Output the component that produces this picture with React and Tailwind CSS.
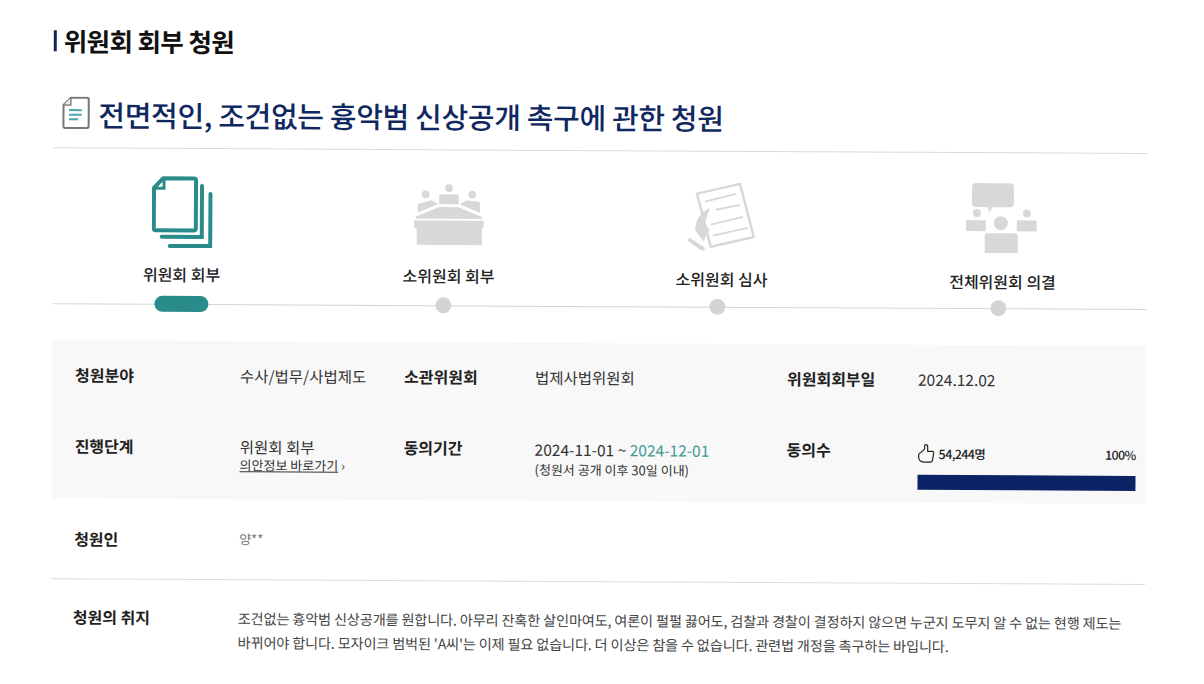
import React from "react";

const G = "#d8d8d8";
const T = "#2a8c8a";

function DocIcon() {
  return (
    <svg width="30" height="33" viewBox="0 0 32 36" fill="none">
      <path d="M11 1.500h17.500a2 2 0 0 1 2 2v29a2 2 0 0 1-2 2H5a2 2 0 0 1-2-2V9.500z" fill="#fff" stroke="#777" strokeWidth="2.200" />
      <path d="M3 9.500h8v-8" fill="#eee" stroke="#777" strokeWidth="1.500" />
      <path d="M9 15h14M9 20h14M9 25h10" stroke="#4fa6a6" strokeWidth="2.200" />
    </svg>
  );
}
function StackIcon() {
  return (
    <svg width="61" height="73" viewBox="0 0 61 73" fill="none" stroke={T} strokeWidth="4">
      <path d="M11 2.500h31a2 2 0 0 1 2 2v48a2 2 0 0 1-2 2H4a2 2 0 0 1-2-2V12z" strokeLinejoin="round" />
      <path d="M2 12.500h10V3" strokeWidth="3" />
      <path d="M50 10v51H10" strokeLinecap="round" />
      <path d="M58.500 18v52H18" strokeLinecap="round" />
    </svg>
  );
}
function MeetingIcon() {
  return (
    <svg width="70" height="63" viewBox="0 0 72 64" fill={G}>
      <circle cx="36" cy="4.500" r="4" />
      <circle cx="12" cy="11" r="4" />
      <circle cx="60" cy="11" r="4" />
      <rect x="26" y="11" width="20" height="10" />
      <path d="M4 21l14-4 7 4-21 9zM68 21a3 3 0 0 0-3-3l-11-1-7 4 21 9z" />
      <path d="M2 34l24-10h20l24 10v2H2z" />
      <path d="M0 38h72v7l-2 1v17H3V46l-3-1z" />
    </svg>
  );
}
function ReviewIcon() {
  return (
    <svg width="67" height="68" viewBox="0 0 67 68" fill="none">
      <path d="M9 11L52 1l14 53-43 10z" fill="#fff" stroke={G} strokeWidth="2.500" />
      <path d="M17 19l31-8M28 27l24-5M23 42l32-8M25 53l35-8" stroke={G} strokeWidth="1.800" />
      <path d="M22 25c-6 3-10 7-13 13l-2 9 9 12 3-9 3-2-5-8z" fill={G} />
      <path d="M2 56l-1 2 14 10 1.500-2.500z" fill={G} stroke={G} strokeWidth="1.500" />
    </svg>
  );
}
function PanelIcon() {
  return (
    <svg width="71" height="70" viewBox="0 0 71 70" fill={G}>
      <path d="M10 0h34a4 4 0 0 1 4 4v16a4 4 0 0 1-4 4H27l-4 5-1-5H10a4 4 0 0 1-4-4V4a4 4 0 0 1 4-4z" />
      <circle cx="11" cy="30" r="4" />
      <circle cx="61" cy="30" r="4" />
      <rect x="0" y="37" width="20" height="11" />
      <rect x="51" y="37" width="20" height="11" />
      <circle cx="35" cy="40" r="7" />
      <path d="M22 50h27a3 3 0 0 1 3 3v17H19V53a3 3 0 0 1 3-3z" />
    </svg>
  );
}
function ThumbIcon() {
  return (
    <svg width="17" height="20" viewBox="0 0 17 20" fill="none" stroke="#222" strokeWidth="1.200" strokeLinejoin="round">
      <path d="M1 11.500c0-1.500 1-2.300 2.500-3L7 5V2c0-.8.500-1.300 1.200-1.300S10 1.500 10 3v4.500h4.500c1.200 0 1.800 1 1.600 2l-1.300 7c-.2 1-1 1.700-2 1.700H6.500C3 18.200 1 16 1 13z" />
    </svg>
  );
}

const labelCls = "text-[16px] font-bold text-[#222] leading-[20px]";
const valueCls = "text-[15.500px] text-[#333] leading-[20px]";
const stepLabel = "flex justify-center text-[16px] font-medium leading-[20px] text-[#222]";

export default function App() {
  return (
    <div
      className="w-[1204px] h-[684px] overflow-hidden bg-white origin-top-left rotate-[0.3deg] pl-[54px] pt-[27px] text-[#222]"
      style={{ fontFamily: '"Noto Sans CJK KR", "Noto Sans", sans-serif' }}
    >
      <div className="w-[1094px]">
        <div className="flex items-center gap-[7px] h-[26px]">
          <div className="w-[3px] h-[21px] bg-[#13264f]" />
          <div className="text-[25.500px] font-bold tracking-[-0.6px] leading-[26px] text-[#111]">위원회 회부 청원</div>
        </div>
        <div className="flex items-center gap-[8px] mt-[31px] h-[64px] pb-[6px] border-b border-[#d9d9d9]">
          <div className="ml-[7px] flex"><DocIcon /></div>
          <div className="text-[29px] font-medium tracking-[-0.33px] leading-[36px] text-[#10285f]">
            전면적인, 조건없는 흉악범 신상공개 촉구에 관한 청원
          </div>
        </div>

        <div className="flex h-[101px]">
          <div className="w-[258px] flex justify-center pt-[27px]"><StackIcon /></div>
          <div className="w-[266px] flex justify-center pt-[33px]"><div className="ml-[10px]"><MeetingIcon /></div></div>
          <div className="w-[282px] flex justify-center pt-[31px]"><div className="ml-[7px]"><ReviewIcon /></div></div>
          <div className="w-[280px] flex justify-center pt-[30px]"><div className="ml-[5px]"><PanelIcon /></div></div>
        </div>

        <div className="flex">
          <div className={`w-[258px] ${stepLabel} mt-[14px]`}>위원회 회부</div>
          <div className={`w-[266px] ${stepLabel} mt-[14px] pl-[10px]`}>소위원회 회부</div>
          <div className={`w-[282px] ${stepLabel} mt-[16px] pl-[8px]`}>소위원회 심사</div>
          <div className={`w-[280px] ${stepLabel} mt-[17px] pl-[8px]`}>전체위원회 의결</div>
        </div>

        <div className="flex border-t border-[#d5d5d5] mt-[17px]">
          <div className="w-[258px] flex justify-center">
            <div className="w-[54px] h-[16px] -mt-[9px] rounded-full" style={{ backgroundColor: T }} />
          </div>
          <div className="w-[266px] flex justify-center">
            <div className="w-[16px] h-[16px] -mt-[9px] rounded-full bg-[#d4d4d4]" />
          </div>
          <div className="w-[282px] flex justify-center">
            <div className="w-[16px] h-[16px] -mt-[9px] rounded-full bg-[#d4d4d4]" />
          </div>
          <div className="w-[280px] flex justify-center">
            <div className="w-[16px] h-[16px] -mt-[9px] rounded-full bg-[#d4d4d4]" />
          </div>
        </div>

        <div className="mt-[29px] h-[158px] bg-[#f8f8f8] pl-[23px] pt-[24px] grid grid-cols-[165px_164px_131px_252px_131px_218px] grid-rows-[71px_63px]">
          <div className={labelCls}>청원분야</div>
          <div className={valueCls}>수사/법무/사법제도</div>
          <div className={labelCls}>소관위원회</div>
          <div className={valueCls}>법제사법위원회</div>
          <div className={labelCls}>위원회회부일</div>
          <div className={valueCls}>2024.12.02</div>

          <div className={labelCls}>진행단계</div>
          <div className="flex flex-col">
            <div className={valueCls}>위원회 회부</div>
            <div className="text-[13px] leading-[16px] mt-[1px] text-[#333]">
              <span className="underline">의안정보 바로가기</span> <span>›</span>
            </div>
          </div>
          <div className={labelCls}>동의기간</div>
          <div className="flex flex-col pt-[1px]">
            <div className="text-[15.500px] leading-[20px] text-[#333]">
              2024-11-01 ~ <span className="text-[#3f9a94]">2024-12-01</span>
            </div>
            <div className="text-[13px] leading-[16px] mt-[3px] text-[#333]">(청원서 공개 이후 30일 이내)</div>
          </div>
          <div className={labelCls}>동의수</div>
          <div className="flex flex-col pt-[4px]">
            <div className="flex items-center justify-between h-[20px]">
              <div className="flex items-center gap-[4px]">
                <ThumbIcon />
                <span className="text-[12.500px] font-medium tracking-[-0.6px] text-[#222]">54,244명</span>
              </div>
              <span className="text-[12.500px] font-medium tracking-[-0.6px] text-[#222]">100%</span>
            </div>
            <div className="h-[15px] mt-[11px] bg-[#0c2366]" />
          </div>
        </div>

        <div className="h-[81px] flex items-center pl-[23px] border-b border-[#dcdcdc]">
          <div className={`${labelCls} w-[165px]`}>청원인</div>
          <div className="text-[13px] text-[#777]">양**</div>
        </div>

        <div className="flex pl-[22px] pt-[27px]">
          <div className={`${labelCls} w-[165px]`}>청원의 취지</div>
          <div className="-mt-[1px] text-[14.200px] leading-[24px] text-[#444] tracking-[-0.165px] whitespace-nowrap">
            조건없는 흉악범 신상공개를 원합니다. 아무리 잔혹한 살인마여도, 여론이 펄펄 끓어도, 검찰과 경찰이 결정하지 않으면 누군지 도무지 알 수 없는 현행 제도는
            <br />
            바뀌어야 합니다. 모자이크 범벅된 'A씨'는 이제 필요 없습니다. 더 이상은 참을 수 없습니다. 관련법 개정을 촉구하는 바입니다.
          </div>
        </div>
      </div>
    </div>
  );
}
